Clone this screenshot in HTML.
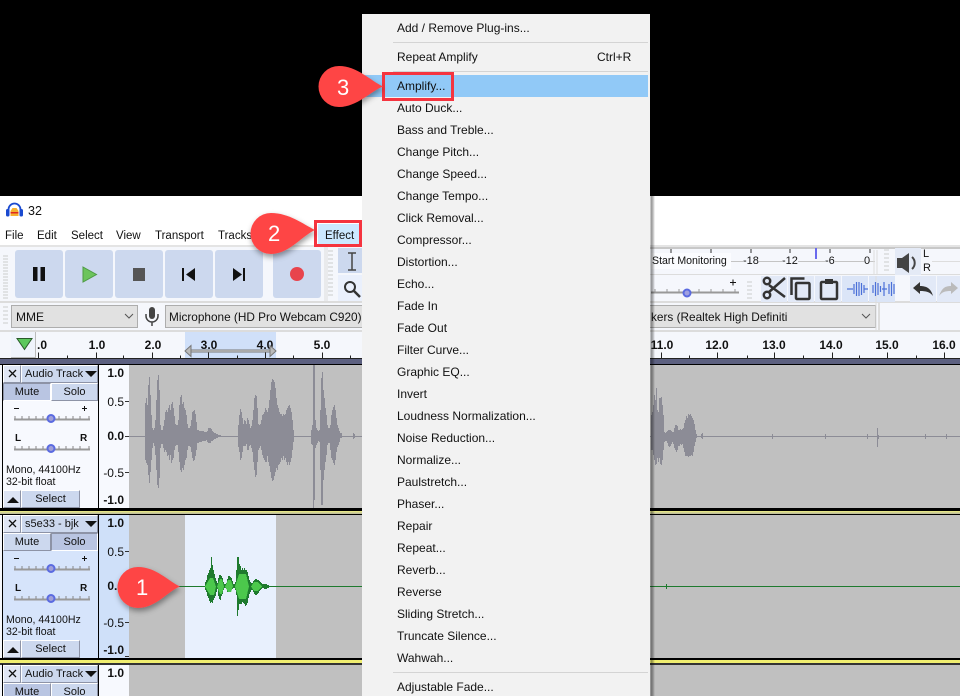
<!DOCTYPE html>
<html><head><meta charset="utf-8"><style>
html,body{margin:0;padding:0;background:#000}
#p{position:relative;width:960px;height:696px;overflow:hidden;background:#000;font-family:"Liberation Sans",sans-serif;color:#111;font-size:12px}
.a{position:absolute}
.t{position:absolute;white-space:nowrap;line-height:14px}
.b{position:absolute;background:#ccd8ee;border-radius:3px}
.m{position:absolute;left:397px;white-space:nowrap;line-height:14px;font-size:12px;color:#111}
.r{position:absolute;white-space:nowrap;font-weight:bold;font-size:12px;line-height:14px;transform:translateX(-50%)}
.v{position:absolute;right:0;white-space:nowrap;font-size:12px;line-height:14px}
.s{position:absolute;background:#e1e1e1;border:1px solid #adadad;box-sizing:border-box}
.pb{position:absolute;box-sizing:border-box;background:#ccd8ee;border:1px solid #fff;border-right-color:#8d93a6;border-bottom-color:#8d93a6;text-align:center;font-size:11px;line-height:16px}
.i{font-size:10.6px}
.tl{position:absolute;white-space:nowrap;line-height:14px;font-size:11.5px}
svg{position:absolute;left:0;top:0}
</style></head><body><div id="p">
<div class="a" style="left:0;top:196px;width:960px;height:500px;background:#f5f7fc"></div>
<div class="a" style="left:0;top:196px;width:960px;height:49px;background:#fff"></div>
<div class="t" style="left:28px;top:204px;font-size:12.500px">32</div>
<svg width="960" height="696" style="z-index:1">
<path d="M8.500 213v-3.500a6 6 0 0 1 12 0v3.500" transform="translate(0,0)" fill="none" stroke="#1a4ad0" stroke-width="1.800"/>
<rect x="6" y="209" width="3.500" height="7.500" rx="1.500" fill="#1a4ad0"/><rect x="19.500" y="209" width="3.500" height="7.500" rx="1.500" fill="#1a4ad0"/>
<path d="M10.500 216v-5l2-3h4l2 3v5z" fill="#f5b030"/><path d="M10.500 212h8v1.500h-8z" fill="#e02820"/>
</svg>
<div class="tl" style="left:5px;top:229px">File</div>
<div class="tl" style="left:37px;top:229px">Edit</div>
<div class="tl" style="left:71px;top:229px">Select</div>
<div class="tl" style="left:116px;top:229px">View</div>
<div class="tl" style="left:155px;top:229px">Transport</div>
<div class="tl" style="left:218px;top:229px">Tracks</div>
<div class="a" style="left:0;top:245px;width:960px;height:2px;background:#e4e4e4"></div>
<div class="a" style="left:318px;top:224px;width:41px;height:20px;background:#cce8ff"></div>
<div class="tl" style="left:325px;top:229px">Effect</div>

<!-- transport -->
<div class="b" style="left:15px;top:250px;width:48px;height:48px"></div>
<div class="b" style="left:65px;top:250px;width:48px;height:48px"></div>
<div class="b" style="left:115px;top:250px;width:48px;height:48px"></div>
<div class="b" style="left:165px;top:250px;width:48px;height:48px"></div>
<div class="b" style="left:215px;top:250px;width:48px;height:48px"></div>
<div class="b" style="left:273px;top:250px;width:48px;height:48px"></div>
<div class="a" style="left:338px;top:248px;width:24px;height:25px;background:#ccd8ee"></div>
<div class="a" style="left:338px;top:275px;width:24px;height:26px;background:#eaf0fc"></div>
<div class="a" style="left:0;top:301px;width:960px;height:2px;background:#dcdcdc"></div>
<div class="a" style="left:0;top:330px;width:960px;height:2px;background:#dcdcdc"></div>
<div class="a" style="left:640px;top:274px;width:320px;height:1px;background:#dcdcdc"></div>

<svg width="960" height="696" style="z-index:1">
<g fill="#111"><rect x="33" y="267" width="4.500" height="14"/><rect x="40.500" y="267" width="4.500" height="14"/></g>
<path d="M83 267 L96.500 274.500 L83 282z" fill="#6cc45c" stroke="#4e9a44"/>
<rect x="133" y="268" width="12" height="13" fill="#555"/>
<path d="M182 268h2v13h-2z M195 268v13l-9-6.500z" fill="#111"/>
<path d="M233 268v13l9-6.500z M243 268h2v13h-2z" fill="#111"/>
<circle cx="297" cy="274" r="7" fill="#e8444c"/>
<g stroke="#ccc" stroke-width="1"><path d="M3 256h5M3 259h5M3 262h5M3 265h5M3 268h5M3 271h5M3 274h5M3 277h5M3 280h5M3 283h5M3 286h5M3 289h5M3 292h5M3 295h5M3 298h5"/>
<path d="M328 251h5M328 255h5M328 259h5M328 263h5M328 267h5M328 271h5M328 275h5M328 279h5M328 283h5M328 287h5M328 291h5M328 295h5"/>
<path d="M3 307h5M3 311h5M3 315h5M3 319h5M3 323h5"/></g>
<path d="M348 253h8M348 270h8M352 253v17" stroke="#444" stroke-width="1.500" fill="none"/>
<circle cx="350" cy="287" r="5" fill="none" stroke="#333" stroke-width="2"/><path d="M354 291l6 6" stroke="#333" stroke-width="2.500"/>
<path d="M325 247v54M327 247v54" stroke="#ddd"/>
</svg>

<!-- device row -->
<div class="s" style="left:11px;top:305px;width:127px;height:23px"></div>
<div class="t" style="left:16px;top:310px">MME</div>
<div class="s" style="left:165px;top:305px;width:200px;height:23px"></div>
<div class="t" style="left:169px;top:310px;font-size:11.800px">Microphone (HD Pro Webcam C920)</div>
<div class="s" style="left:640px;top:305px;width:236px;height:23px"></div>
<div class="t" style="left:651px;top:310px;font-size:11.800px;z-index:3">kers (Realtek High Definiti</div>
<div class="a" style="left:878px;top:303px;width:2px;height:27px;background:#ddd"></div>
<svg width="960" height="696" style="z-index:1">
<path d="M125 314l4 4 4-4M862 314l4 4 4-4" fill="none" stroke="#555"/>
<rect x="149" y="307" width="6" height="12" rx="3" fill="#444"/>
<path d="M146 314v2a6 6 0 0 0 12 0v-2M152 322v4" fill="none" stroke="#444" stroke-width="1.500"/>
</svg>

<!-- meter & tool right -->
<div class="a" style="left:640px;top:247px;width:320px;height:2px;background:#c8c8c8"></div>
<div class="a" style="left:725px;top:261px;width:150px;height:1px;background:#c4c4c4"></div>
<div class="a" style="left:651px;top:253px;width:80px;height:16px;background:#fbfcff"></div>
<div class="t i" style="left:652px;top:254px;z-index:3">Start Monitoring</div>
<div class="t" style="left:743px;top:254px;font-size:11px;background:#f5f7fc">-18</div>
<div class="t" style="left:782px;top:254px;font-size:11px;background:#f5f7fc">-12</div>
<div class="t" style="left:825px;top:254px;font-size:11px;background:#f5f7fc">-6</div>
<div class="t" style="left:864px;top:254px;font-size:11px;background:#f5f7fc">0</div>
<div class="a" style="left:815px;top:248px;width:2px;height:11px;background:#6a6aee"></div>
<div class="a" style="left:895px;top:248px;width:26px;height:27px;background:#e4eaf6"></div>
<div class="t" style="left:923px;top:247px;font-size:11px">L</div>
<div class="t" style="left:923px;top:261px;font-size:11px">R</div>
<div class="a" style="left:932px;top:261px;width:28px;height:1px;background:#ddd"></div>
<div class="a" style="left:761px;top:276px;width:26px;height:26px;background:#e2e9f7"></div>
<div class="a" style="left:788px;top:276px;width:26px;height:26px;background:#e2e9f7"></div>
<div class="a" style="left:815px;top:276px;width:26px;height:26px;background:#e2e9f7"></div>
<div class="a" style="left:842px;top:276px;width:26px;height:26px;background:#dbe5f7"></div>
<div class="a" style="left:869px;top:276px;width:26px;height:26px;background:#dbe5f7"></div>
<div class="a" style="left:910px;top:276px;width:26px;height:26px;background:#e2e9f7"></div>
<div class="a" style="left:937px;top:276px;width:23px;height:26px;background:#e2e9f7"></div>
<svg width="960" height="696" style="z-index:1">
<path d="M671 249v4M711 249v4M751 249v4M790 249v4M830 249v4M870 249v4" stroke="#333"/>
<path d="M651 292.500H739" stroke="#999" stroke-width="2"/>
<path d="M655 289v3M667 289v3M679 289v3M699 289v3M711 289v3M723 289v3M735 289v3" stroke="#999"/>
<circle cx="687" cy="293" r="3.500" fill="#a0a0e0" stroke="#5a6ae0" stroke-width="2"/>
<path d="M730 282.500h6M733 279.500v6" stroke="#111"/>
<path d="M747 282h5M747 286h5M747 290h5M747 294h5M747 298h5" stroke="#ccc"/>
<path d="M884 250h5M884 254h5M884 258h5M884 262h5M884 266h5M884 270h5" stroke="#ccc"/>
<path d="M877 250v24M874 250v24M876 276v54" stroke="#ddd"/>
<path d="M897 258h5l7-5v20l-7-5h-5z" fill="#444"/><path d="M912 257a8 8 0 0 1 0 12" fill="none" stroke="#444" stroke-width="2"/>
<g fill="none" stroke="#333" stroke-width="2.500">
<path d="M769 285L785 297M769 292L785 278"/><circle cx="767" cy="281" r="3.200"/><circle cx="767" cy="295" r="3.200"/>
<rect x="796" y="283" width="13.500" height="16" rx="1"/><path d="M791.500 295v-16.500h13"/>
<rect x="821" y="282" width="16" height="17" rx="1"/></g>
<rect x="825" y="279" width="8" height="5" fill="#333"/>
<g stroke="#4a70d8" stroke-width="1.200" fill="none"><path d="M847 289h6M864 289h4M854 284v10M856.500 282v14M859 282v14M861.500 283v12M864 285v8"/>
<path d="M873 285v8M875.500 282v14M878 283v12M880.500 286v6M882 289h5M884 282v14M889 284v10M891.500 282v14M894 284v10"/></g>
<path d="M913 288l7-6v4c6 0 11 2 13 10-3-4-7-5-13-5v3z" fill="#333"/>
<path d="M958 288l-7-6v4c-6 0-9 2-12 10 3-4 6-5 12-5v3z" fill="#bbb"/>
</svg>

<!-- ruler -->
<div class="a" style="left:185px;top:332px;width:91px;height:26px;background:#d0e0f9"></div>
<div class="a" style="left:11px;top:332px;width:25px;height:26px;background:#f0f4fc;border-right:1px solid #bbb;border-bottom:1px solid #bbb;box-sizing:border-box"></div>
<div class="a" style="left:0;top:358px;width:960px;height:6px;background:#5c6080"></div>
<div class="a" style="left:0;top:358px;width:960px;height:1px;background:#222"></div>
<div class="r" style="left:42px;top:338px">.0</div><div class="r" style="left:97px;top:338px">1.0</div><div class="r" style="left:153px;top:338px">2.0</div><div class="r" style="left:209px;top:338px">3.0</div><div class="r" style="left:265px;top:338px">4.0</div><div class="r" style="left:322px;top:338px">5.0</div>
<div class="r" style="left:662px;top:338px;z-index:3">11.0</div><div class="r" style="left:717px;top:338px">12.0</div><div class="r" style="left:774px;top:338px">13.0</div><div class="r" style="left:831px;top:338px">14.0</div><div class="r" style="left:887px;top:338px">15.0</div><div class="r" style="left:944px;top:338px">16.0</div>

<!-- Tracks background -->
<div class="a" style="left:129px;top:365px;width:831px;height:143px;background:#c0c0c0"></div>
<div class="a" style="left:129px;top:515px;width:831px;height:143px;background:#c0c0c0"></div>
<div class="a" style="left:185px;top:515px;width:91px;height:143px;background:#e8f0fd"></div>
<div class="a" style="left:129px;top:665px;width:831px;height:31px;background:#c0c0c0"></div>
<div class="a" style="left:0;top:364px;width:960px;height:1px;background:#000"></div>
<div class="a" style="left:0;top:508px;width:960px;height:3px;background:#000"></div>
<div class="a" style="left:0;top:511px;width:960px;height:3px;background:linear-gradient(#eded80,#b8b8a0)"></div>
<div class="a" style="left:0;top:514px;width:960px;height:1px;background:#000"></div>
<div class="a" style="left:0;top:658px;width:960px;height:2px;background:#000"></div>
<div class="a" style="left:0;top:660px;width:960px;height:3px;background:#f0ee70"></div>
<div class="a" style="left:0;top:663px;width:960px;height:2px;background:#333"></div>

<!-- left columns -->
<div class="a" style="left:0;top:365px;width:3px;height:143px;background:#f5f7fc"></div>
<div class="a" style="left:0;top:515px;width:3px;height:143px;background:#f5f7fc"></div>
<div class="a" style="left:0;top:665px;width:3px;height:31px;background:#f5f7fc"></div>
<div class="a" style="left:2px;top:364px;width:1px;height:144px;background:#000"></div>
<div class="a" style="left:2px;top:514px;width:1px;height:144px;background:#000"></div>
<div class="a" style="left:2px;top:664px;width:1px;height:32px;background:#000"></div>

<!-- track 1 panel -->
<div class="a" style="left:3px;top:365px;width:95px;height:143px;background:#f7f9fe"></div>
<div class="a" style="left:98px;top:365px;width:1px;height:143px;background:#000"></div>
<div class="a" style="left:99px;top:365px;width:30px;height:143px;background:#f7f9fe"></div>
<div class="pb" style="left:3px;top:365px;width:18px;height:18px;background:#e0e6f4"></div>
<div class="pb" style="left:21px;top:365px;width:77px;height:18px;text-align:left;padding-left:3px">Audio Track</div>
<div class="pb" style="left:3px;top:383px;width:48px;height:18px;background:#b9c5e2;border-color:#8d93a6 #fff #fff #8d93a6">Mute</div>
<div class="pb" style="left:51px;top:383px;width:47px;height:18px">Solo</div>
<div class="pb" style="left:3px;top:490px;width:18px;height:18px;background:#dde4f4"></div>
<div class="pb" style="left:21px;top:490px;width:59px;height:18px">Select</div>
<div class="t i" style="left:6px;top:463px">Mono, 44100Hz</div>
<div class="t i" style="left:6px;top:475px">32-bit float</div>
<div class="t" style="left:15px;top:432px;font-size:10px;font-weight:bold">L</div>
<div class="t" style="left:80px;top:432px;font-size:10px;font-weight:bold">R</div>
<div class="a" style="left:99px;top:365px;width:25px;height:143px">
<div class="v" style="top:1px;font-weight:bold">1.0</div><div class="v" style="top:30px">0.5</div><div class="v" style="top:64px;font-weight:bold">0.0</div><div class="v" style="top:101px">-0.5</div><div class="v" style="top:128px;font-weight:bold">-1.0</div></div>

<!-- track 2 panel -->
<div class="a" style="left:3px;top:515px;width:95px;height:143px;background:#d6e4fb"></div>
<div class="a" style="left:98px;top:515px;width:1px;height:143px;background:#000"></div>
<div class="a" style="left:99px;top:515px;width:30px;height:143px;background:#cfe0f9"></div>
<div class="pb" style="left:3px;top:515px;width:18px;height:18px;background:#e0e6f4"></div>
<div class="pb" style="left:21px;top:515px;width:77px;height:18px;text-align:left;padding-left:3px">s5e33 - bjk</div>
<div class="pb" style="left:3px;top:533px;width:48px;height:18px">Mute</div>
<div class="pb" style="left:51px;top:533px;width:47px;height:18px;background:#b9c5e2;border-color:#8d93a6 #fff #fff #8d93a6">Solo</div>
<div class="pb" style="left:3px;top:640px;width:18px;height:18px;background:#dde4f4"></div>
<div class="pb" style="left:21px;top:640px;width:59px;height:18px">Select</div>
<div class="t i" style="left:6px;top:613px">Mono, 44100Hz</div>
<div class="t i" style="left:6px;top:625px">32-bit float</div>
<div class="t" style="left:15px;top:582px;font-size:10px;font-weight:bold">L</div>
<div class="t" style="left:80px;top:582px;font-size:10px;font-weight:bold">R</div>
<div class="a" style="left:99px;top:515px;width:25px;height:143px">
<div class="v" style="top:1px;font-weight:bold">1.0</div><div class="v" style="top:30px">0.5</div><div class="v" style="top:64px;font-weight:bold">0.0</div><div class="v" style="top:101px">-0.5</div><div class="v" style="top:128px;font-weight:bold">-1.0</div></div>

<!-- track 3 panel -->
<div class="a" style="left:3px;top:665px;width:95px;height:31px;background:#f7f9fe"></div>
<div class="a" style="left:98px;top:665px;width:1px;height:31px;background:#000"></div>
<div class="a" style="left:99px;top:665px;width:30px;height:31px;background:#f7f9fe"></div>
<div class="pb" style="left:3px;top:665px;width:18px;height:18px;background:#e0e6f4"></div>
<div class="pb" style="left:21px;top:665px;width:77px;height:18px;text-align:left;padding-left:3px">Audio Track</div>
<div class="pb" style="left:3px;top:683px;width:48px;height:18px;background:#b9c5e2">Mute</div>
<div class="pb" style="left:51px;top:683px;width:47px;height:18px">Solo</div>
<div class="a" style="left:99px;top:665px;width:25px;height:20px"><div class="v" style="top:1px;font-weight:bold">1.0</div></div>

<svg width="960" height="696" style="z-index:1">
<!-- ruler details -->
<path d="M38.500 352.500v6M96.500 352.500v6M152.500 352.500v6M208.500 352.500v6M265.500 352.500v6M322.500 352.500v6M67.500 355.500v3M123.500 355.500v3M180.500 355.500v3M237.500 355.500v3M293.500 355.500v3M350.500 355.500v3M661.500 352.500v6M689.500 355.500v3M717.500 352.500v6M747.500 355.500v3M774.500 352.500v6M803.500 355.500v3M832.500 352.500v6M859.500 355.500v3M887.500 352.500v6M916.500 355.500v3M944.500 352.500v6" stroke="#222"/>
<path d="M17 338.500h15l-7.500 11z" fill="#5cc85c" stroke="#2a5a2a"/>
<path d="M190 351H271" stroke="#777" stroke-width="3"/><path d="M190 351H271" stroke="#ddd" stroke-width="1"/>
<path d="M185 351l6-5.500v11zM276 351l-6-5.500v11z" fill="#bbb" stroke="#777"/>
<!-- sliders -->
<g>
<path d="M14 419.500H90M14 449.500H90M14 569.500H90M14 599.500H90" stroke="#999" stroke-width="2"/>
<path d="M15 416v3M22 416v3M29 416v3M36 416v3M43 416v3M59 416v3M66 416v3M73 416v3M80 416v3M89 416v3M15 446v3M22 446v3M29 446v3M36 446v3M43 446v3M59 446v3M66 446v3M73 446v3M80 446v3M89 446v3M15 566v3M22 566v3M29 566v3M36 566v3M43 566v3M59 566v3M66 566v3M73 566v3M80 566v3M89 566v3M15 596v3M22 596v3M29 596v3M36 596v3M43 596v3M59 596v3M66 596v3M73 596v3M80 596v3M89 596v3" stroke="#888"/>
<g fill="#a0a0d8" stroke="#5a6ae0" stroke-width="2"><circle cx="51" cy="418.500" r="3.500"/><circle cx="51" cy="448.500" r="3.500"/><circle cx="51" cy="568.500" r="3.500"/><circle cx="51" cy="598.500" r="3.500"/></g>
<path d="M14 408.500h5M82 408.500h5M84.500 406v5M14 558.500h5M82 558.500h5M84.500 556v5" stroke="#111"/>
<path d="M9 370l7 7M16 370l-7 7M9 520l7 7M16 520l-7 7M9 670l7 7M16 670l-7 7" stroke="#111" stroke-width="1.300"/>
<path d="M85 371h12l-6 6zM85 521h12l-6 6zM85 671h12l-6 6z" fill="#111"/>
<path d="M7 503l6-6 6 6zM7 653l6-6 6 6z" fill="#111"/>
</g>
<path d="M125 401.500h4M125 436.500h4M125 472.500h4M125 551.500h4M125 586.500h4M125 622.500h4M125 656.500h4" stroke="#333"/>
<!-- grey waveform -->
<g shape-rendering="crispEdges">
<path d="M129 436.500H960" stroke="#8c8c96" stroke-width="1"/>
<path stroke="#8c8c96" stroke-width="1" fill="none" d="M145.500 403V460M146.500 398V463M147.500 405V465M148.500 385V475M149.500 377V483M150.500 395V472M151.500 415V460M152.500 428V448M153.500 430V443M154.500 428V446M155.500 420V455M156.500 400V470M157.500 380V485M158.500 375V488M159.500 390V478M160.500 425V448M161.500 430V444M162.500 430V444M163.500 426V448M164.500 420V452M165.500 412V450M166.500 410V452M167.500 412V456M168.500 408V455M169.500 405V460M170.500 410V455M171.500 404V463M172.500 402V460M173.500 408V458M174.500 416V450M175.500 424V446M176.500 425V445M177.500 425V445M178.500 420V452M179.500 405V462M180.500 397V470M181.500 395V472M182.500 404V468M183.500 402V470M184.500 408V465M185.500 410V460M186.500 415V458M187.500 424V450M188.500 428V446M189.500 428V446M190.500 426V447M191.500 420V452M192.500 412V458M193.500 411V461M194.500 410V460M195.500 414V456M196.500 422V450M197.500 430V443M198.500 430V443M199.500 431V442M200.500 431V442M201.500 431V442M202.500 431V441M203.500 431V441M204.500 432V441M205.500 432V441M206.500 432V440M207.500 431V442M208.500 428V443M209.500 428V443M210.500 428V443M211.500 429V441M212.500 431V441M213.500 432V440M214.500 433V439M215.500 433V439M216.500 434V438M217.500 434V438M218.500 435V437M219.500 435V437M220.500 435V437"/>
<path stroke="#8c8c96" stroke-width="1" fill="none" d="M238.500 425V447M239.500 415V452M240.500 409V460M241.500 412V458M242.500 418V452M243.500 424V446M244.500 420V446M245.500 421V446M246.500 424V444M247.500 418V450M248.500 420V450M249.500 424V446M250.500 428V445M251.500 426V448M252.500 420V452M253.500 410V462M254.500 398V470M255.500 395V477M256.500 396V475M257.500 408V462M258.500 424V450M259.500 425V448M260.500 424V446M261.500 420V450M262.500 415V455M263.500 414V458M264.500 412V460M265.500 408V462M266.500 410V462M267.500 412V456M268.500 408V462M269.500 400V466M270.500 390V472M271.500 382V478M272.500 379V481M273.500 380V480M274.500 382V476M275.500 388V472M276.500 398V468M277.500 405V470M278.500 408V465M279.500 412V464M280.500 414V462M281.500 414V458M282.500 416V460M283.500 414V456M284.500 415V460M285.500 414V458M286.500 410V462M287.500 408V465M288.500 406V462M289.500 405V465M290.500 408V462M291.500 412V458M292.500 420V450M293.500 430V442"/>
<path stroke="#8c8c96" stroke-width="1" fill="none" d="M311.500 430V444M312.500 425V445M313.500 365V508M314.500 365V500M315.500 420V448M316.500 428V445M317.500 430V443M318.500 431V441M319.500 430V442M320.500 410V470M321.500 378V505M322.500 372V505M323.500 390V480M324.500 398V470M325.500 408V462M326.500 415V455M327.500 425V445M328.500 428V443M329.500 428V443M330.500 425V450M331.500 415V458M332.500 410V460M333.500 407V463M334.500 405V465M335.500 410V460M336.500 418V452M337.500 425V447M338.500 428V445M339.500 431V442M340.500 433V438M341.500 433V438M353.500 433V439M354.500 434V438"/>
<path stroke="#8c8c96" stroke-width="1" fill="none" d="M651.500 415V450M652.500 412V450M653.500 405V455M654.500 395V460M655.500 400V465M656.500 388V464M657.500 410V458M658.500 412V462M659.500 398V458M660.500 398V464M661.500 397V465M662.500 405V460M663.500 415V450M664.500 432V442M665.500 433V441M666.500 432V441M667.500 431V443M668.500 430V446M669.500 430V447M670.500 430V446M671.500 431V444M672.500 432V442M673.500 432V444M674.500 428V448M675.500 425V450M676.500 425V452M677.500 426V450M678.500 430V446M679.500 430V446M680.500 429V444M681.500 430V445M682.500 429V444M683.500 428V448M684.500 423V452M685.500 420V456M686.500 416V456M687.500 418V456M688.500 414V457M689.500 415V456M690.500 414V456M691.500 416V455M692.500 418V456M693.500 420V452M694.500 424V446M695.500 430V442M696.500 434V438M701.500 434V438M702.500 433V439M772.500 434V439M825.500 434V439M867.500 434V439M877.500 428V447M878.500 435V439M925.500 434V439M946.500 434V439"/>
<!-- green waveform -->
<path d="M129 586.500H960" stroke="#1e7a2e"/>
<path stroke="#1e7a2e" stroke-width="1" fill="none" d="M205.500 582V590M206.500 580V592M207.500 575V596M208.500 573V598M209.500 570V601M210.500 568V603M211.500 557V602M212.500 565V603M213.500 570V600M214.500 574V598M215.500 578V596M216.500 581V592M217.500 583V589M218.500 578V596M219.500 575V599M220.500 575V600M221.500 576V596M222.500 578V594M223.500 582V590M224.500 584V588M225.500 584V588M226.500 583V589M227.500 579V592M228.500 576V592M229.500 576V592M230.500 577V591M231.500 578V590M232.500 581V589M233.500 584V588M234.500 584V588M235.500 582V590M236.500 570V595M237.500 557V616M238.500 557V610M239.500 564V604M240.500 566V604M241.500 570V604M242.500 568V602M243.500 570V603M244.500 568V604M245.500 570V606M246.500 570V605M247.500 572V603M248.500 576V598M249.500 580V594M250.500 582V592M251.500 583V590M252.500 583V590M253.500 581V592M254.500 580V594M255.500 579V595M256.500 579V595M257.500 580V594M258.500 580V593M259.500 581V591M260.500 582V590M261.500 583V589M262.500 584V588M263.500 584V588M264.500 584V589M265.500 584V589M266.500 584V589M267.500 585V588M268.500 585V588M666.500 584V589"/>
<path d="M205 586.500L210 578H213L216 586.500L214 595H210zM217 586.500L220 579H222L224 586.500L222 594H220zM225 586.500L228 580H231L233 586.500L231 592H228zM235 586.500L239 574H246L249 586.500L246 599H239zM251 586.500L254 582H258L262 586.500L258 591H254z" fill="#4cc84c"/>
</g>
</svg>

<!-- menu -->
<div class="a" style="left:650px;top:196px;width:5px;height:500px;z-index:2;background:linear-gradient(90deg,rgba(0,0,0,.12),rgba(0,0,0,.42) 30%,rgba(0,0,0,.2) 70%,rgba(0,0,0,0))"></div>
<div class="a" style="left:362px;top:14px;width:288px;height:682px;background:#f2f2f2;z-index:2">
<div class="a" style="left:31px;top:28px;width:255px;height:1px;background:#d4d4d4"></div>
<div class="a" style="left:31px;top:57px;width:255px;height:1px;background:#d4d4d4"></div>
<div class="a" style="left:3px;top:61px;width:283px;height:22px;background:#91c9f7"></div>
<div class="a" style="left:31px;top:658px;width:255px;height:1px;background:#d4d4d4"></div>
</div>
<div class="a" style="left:0;top:0;width:960px;height:696px;z-index:3">
<div class="m" style="top:21px">Add / Remove Plug-ins...</div>
<div class="m" style="top:50px">Repeat Amplify</div>
<div class="m" style="top:50px;left:597px">Ctrl+R</div>
<div class="m" style="top:79px">Amplify...</div>
<div class="m" style="top:101px">Auto Duck...</div>
<div class="m" style="top:123px">Bass and Treble...</div>
<div class="m" style="top:145px">Change Pitch...</div>
<div class="m" style="top:167px">Change Speed...</div>
<div class="m" style="top:189px">Change Tempo...</div>
<div class="m" style="top:211px">Click Removal...</div>
<div class="m" style="top:233px">Compressor...</div>
<div class="m" style="top:255px">Distortion...</div>
<div class="m" style="top:277px">Echo...</div>
<div class="m" style="top:299px">Fade In</div>
<div class="m" style="top:321px">Fade Out</div>
<div class="m" style="top:343px">Filter Curve...</div>
<div class="m" style="top:365px">Graphic EQ...</div>
<div class="m" style="top:387px">Invert</div>
<div class="m" style="top:409px">Loudness Normalization...</div>
<div class="m" style="top:431px">Noise Reduction...</div>
<div class="m" style="top:453px">Normalize...</div>
<div class="m" style="top:475px">Paulstretch...</div>
<div class="m" style="top:497px">Phaser...</div>
<div class="m" style="top:519px">Repair</div>
<div class="m" style="top:541px">Repeat...</div>
<div class="m" style="top:563px">Reverb...</div>
<div class="m" style="top:585px">Reverse</div>
<div class="m" style="top:607px">Sliding Stretch...</div>
<div class="m" style="top:629px">Truncate Silence...</div>
<div class="m" style="top:651px">Wahwah...</div>
<div class="m" style="top:680px">Adjustable Fade...</div>
</div>

<!-- annotations -->
<div class="a" style="left:314px;top:220px;width:48px;height:27px;box-sizing:border-box;border:3px solid #f5343f;z-index:4"></div>
<div class="a" style="left:382px;top:72px;width:72px;height:29px;box-sizing:border-box;border:3px solid #f5343f;z-index:4"></div>
<svg width="960" height="696" style="z-index:5">
<defs><filter id="f" x="-30%" y="-30%" width="160%" height="170%"><feDropShadow dx="1" dy="3" stdDeviation="3" flood-color="#000" flood-opacity=".4"/></filter></defs>
<g fill="#fe4444" filter="url(#f)">
<path d="M180 586.500C168 591 156 608 138 608A20.500 20.500 0 0 1 138 567C156 567 168 581 180 586.500z"/>
<path d="M315 230C303 235 289 254 271 254A20.500 20.500 0 0 1 271 213C289 213 303 224 315 230z"/>
<path d="M383 86.500C371 91 357 107 339 107A20.500 20.500 0 0 1 339 66C357 66 371 81 383 86.500z"/>
</g>
</svg>
<div class="t" style="left:136px;top:576px;font-size:22px;line-height:24px;color:#fff;z-index:6">1</div>
<div class="t" style="left:268px;top:222px;font-size:22px;line-height:24px;color:#fff;z-index:6">2</div>
<div class="t" style="left:337px;top:76px;font-size:22px;line-height:24px;color:#fff;z-index:6">3</div>
</div></body></html>
